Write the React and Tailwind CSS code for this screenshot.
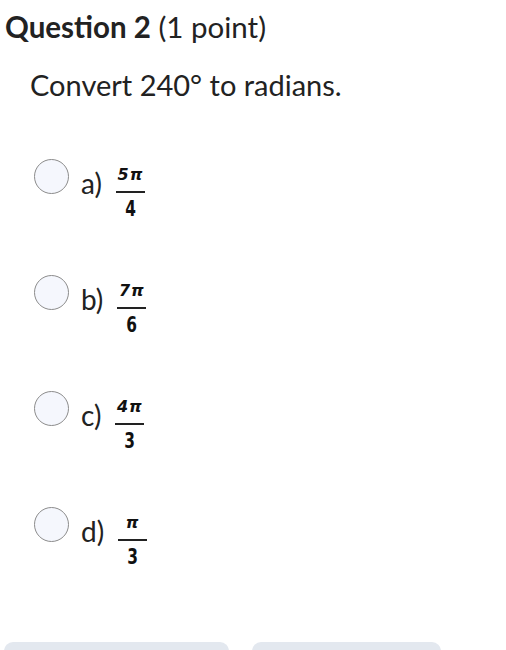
import React from "react";

const options = [
  { l: "a)", n: "5π", d: "4" },
  { l: "b)", n: "7π", d: "6" },
  { l: "c)", n: "4π", d: "3" },
  { l: "d)", n: "π", d: "3" },
];

function Frac({ n, d }) {
  return (
    <span className="inline-flex flex-col items-center font-bold leading-none text-[#111]" style={{ fontFamily: '"DejaVu Sans", sans-serif' }}>
      <span className="h-[26px] text-[16px] leading-[15px] italic tracking-[1px] pt-[2px]">{n}</span>
      <span className="block h-[2px] w-[29px] bg-[#222]" />
      <span className="pt-[7px] text-[22px] leading-[18px] scale-x-70">{d}</span>
    </span>
  );
}

export default function App() {
  return (
    <div className="w-[506px] h-[650px] bg-white overflow-hidden text-[#222]" style={{ fontFamily: 'Lato, "Noto Sans", sans-serif' }}>
      <h2 className="pl-[5px] pt-[8px] text-[29.5px] leading-[38px]">
        <span className="font-bold">Question 2</span> <span>(1 point)</span>
      </h2>
      <p className="pl-[30px] pt-[20px] text-[29px] leading-[38px]">Convert 240° to radians.</p>
      <div className="flex flex-col pl-[34px] pt-[55px]">
        {options.map((o) => (
          <div key={o.l} className="flex items-start h-[116px]">
            <span className="w-[35px] h-[35px] rounded-full border border-[#8c8c8c] bg-[#f5f7fd] shrink-0" />
            <span className="ml-[12px] mt-[9px] text-[28px] leading-[30px]">{o.l}</span>
            <span className="ml-[14px] mt-[3px]"><Frac n={o.n} d={o.d} /></span>
          </div>
        ))}
      </div>
      <div className="flex gap-[23px] pl-[4px] pt-[19px]">
        <div className="w-[225px] h-[40px] rounded-[9px] bg-[#e3e8ef]" />
        <div className="w-[189px] h-[40px] rounded-[9px] bg-[#e3e8ef]" />
      </div>
    </div>
  );
}
